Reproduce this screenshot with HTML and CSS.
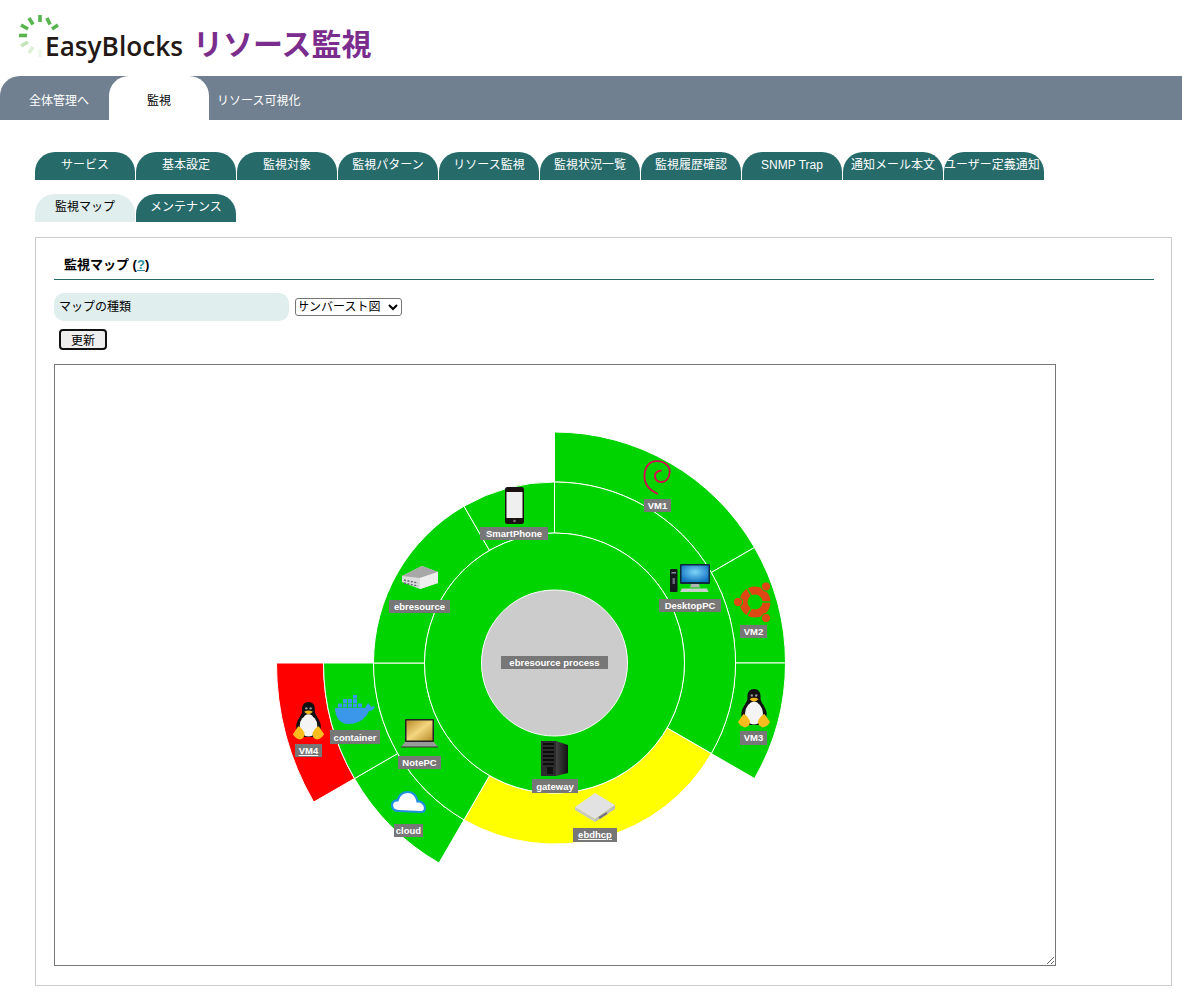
FILE: index.html
```html
<!DOCTYPE html>
<html lang="ja">
<head>
<meta charset="utf-8">
<title>リソース監視</title>
<link rel="stylesheet" href="styles.css">
</head>
<body>
<header class="brand">
  <svg class="logo" width="172" height="76" viewBox="18 0 172 76">
    <g fill="none" stroke-width="3.6">
      <line x1="19" y1="35.5" x2="27" y2="35.5" stroke="#57b44f"/>
      <line x1="21" y1="25" x2="28" y2="29" stroke="#57b44f"/>
      <line x1="29" y1="18" x2="33" y2="24.5" stroke="#57b44f"/>
      <line x1="40" y1="15" x2="40" y2="22" stroke="#57b44f"/>
      <line x1="47" y1="18" x2="50" y2="24.5" stroke="#57b44f"/>
      <line x1="52" y1="29" x2="58" y2="25" stroke="#57b44f"/>
      <line x1="21" y1="46" x2="28" y2="42" stroke="#c5e3bb"/>
      <line x1="29" y1="53" x2="33" y2="47" stroke="#dff0d8"/>
      <line x1="40" y1="49" x2="40" y2="57" stroke="#eef6ea"/>
    </g>
    <text class="logo-word" x="45" y="56" textLength="138" lengthAdjust="spacingAndGlyphs">EasyBlocks</text>
  </svg>
  <h1 class="title">リソース監視</h1>
</header>

<nav class="topnav">
  <a class="topnav-item first">全体管理へ</a>
  <a class="topnav-item active">監視</a>
  <a class="topnav-item plain">リソース可視化</a>
</nav>

<main class="content">
  <ul class="tabs">
    <li class="tab">サービス</li>
    <li class="tab">基本設定</li>
    <li class="tab">監視対象</li>
    <li class="tab">監視パターン</li>
    <li class="tab">リソース監視</li>
    <li class="tab">監視状況一覧</li>
    <li class="tab">監視履歴確認</li>
    <li class="tab">SNMP Trap</li>
    <li class="tab">通知メール本文</li>
    <li class="tab clip">ユーザー定義通知</li>
  </ul>
  <ul class="tabs second">
    <li class="tab current">監視マップ</li>
    <li class="tab">メンテナンス</li>
  </ul>

  <section class="panel">
    <h2 class="panel-title">監視マップ (<a class="help">?</a>)</h2>
    <div class="field">
      <label class="field-label">マップの種類</label>
      <select class="field-select"><option>サンバースト図</option></select>
    </div>
    <button class="update" type="button">更新</button>

    <div class="map">
      <svg class="map-svg" width="1000" height="600" viewBox="55 365 1000 600">
        <defs>
          <symbol id="tux" viewBox="0 0 32 39">
            <path fill="#111" d="M16 0C11 0 9 4 9.500 9C9.800 13 5 17 3.500 23C2.500 29 6 34 10 36H22C26 34 29.500 29 28.500 23C27 17 22.200 13 22.500 9C23 4 21 0 16 0Z"/>
            <ellipse cx="16" cy="24.500" rx="9" ry="11" fill="#f4f4f4"/>
            <path fill="#f4f4f4" d="M12 14Q16 11 20 14L21 18H11Z"/>
            <circle cx="13.800" cy="6.500" r="1.200" fill="#999"/><circle cx="18.200" cy="6.500" r="1.200" fill="#999"/>
            <path fill="#f4b81c" d="M11.500 10Q16 7.500 20.500 10Q16 15 11.500 10Z"/>
            <path fill="#f7bd1e" d="M0 33L5.500 25Q9 26 12 32Q12.500 37 7 38.500Q2 37 0 33Z"/>
            <path fill="#f7bd1e" d="M32 33L26.500 25Q23 26 20 32Q19.500 37 25 38.500Q30 37 32 33Z"/>
          </symbol>
          <radialGradient id="screen" cx=".5" cy=".4" r=".65"><stop offset="0" stop-color="#7ed4f8"/><stop offset="1" stop-color="#0f6fc0"/></radialGradient>
          <linearGradient id="gold" x1="0" y1="0" x2="1" y2="1"><stop offset="0" stop-color="#b98a2c"/><stop offset=".5" stop-color="#f3d67e"/><stop offset="1" stop-color="#b98a2c"/></linearGradient>
          <linearGradient id="rack" x1="0" y1="0" x2="1" y2="0"><stop offset="0" stop-color="#444"/><stop offset="1" stop-color="#111"/></linearGradient>
        </defs>

        <g transform="translate(554.500 663)" stroke="#fff" stroke-width="1">
          <path class="red" d="M-200 115.500A231 231 0 0 1 -231 0H-278A278 278 0 0 0 -240.800 139Z"/>
          <path class="ok" d="M0 -181V-231A231 231 0 0 1 200 -115.500L156.800 -90.500A181 181 0 0 0 0 -181Z"/>
          <path class="ok" d="M156.800 -90.500L200 -115.500A231 231 0 0 1 231 0H181A181 181 0 0 0 156.800 -90.500Z"/>
          <path class="ok" d="M181 0H231A231 231 0 0 1 200 115.500L156.800 90.500A181 181 0 0 0 181 0Z"/>
          <path class="ok" d="M-90.500 156.800L-115.500 200A231 231 0 0 1 -200 115.500L-156.800 90.500A181 181 0 0 0 -90.500 156.800Z"/>
          <path class="ok" d="M-156.800 90.500L-200 115.500A231 231 0 0 1 -231 0H-181A181 181 0 0 0 -156.800 90.500Z"/>
          <path class="ok" d="M0 -130V-181A181 181 0 0 1 156.800 90.500L112.600 65A130 130 0 0 0 0 -130Z"/>
          <path class="warn" d="M112.600 65L156.800 90.500A181 181 0 0 1 -90.500 156.800L-65 112.600A130 130 0 0 0 112.600 65Z"/>
          <path class="ok" d="M-65 112.600L-90.500 156.800A181 181 0 0 1 -181 0H-130A130 130 0 0 0 -65 112.600Z"/>
          <path class="ok" d="M-130 0H-181A181 181 0 0 1 -90.500 -156.800L-65 -112.600A130 130 0 0 0 -130 0Z"/>
          <path class="ok" d="M-65 -112.600L-90.500 -156.800A181 181 0 0 1 0 -181V-130A130 130 0 0 0 -65 -112.600Z"/>
          <circle class="ok" r="130"/>
          <circle class="root" r="73"/>
        </g>

        <!-- SmartPhone -->
        <g transform="translate(505 487)">
          <rect width="19" height="37" rx="2.500" fill="#1a1210"/>
          <rect x="1.500" y="5" width="16" height="26" fill="#efefef"/>
          <circle cx="9.500" cy="34" r="1.300" fill="#777"/>
        </g>
        <!-- switch -->
        <g transform="translate(402 566)">
          <path d="M0 10L20 0L36 6V17L18 23L0 16Z" fill="#dcdcdc"/>
          <path d="M0 10L20 0L36 6L18 12Z" fill="#a8a8a8"/>
          <path d="M18 12L36 6V17L18 23Z" fill="#eee"/>
          <path d="M2 14L16 17M2 17L16 20" stroke="#667" stroke-width="1.500" stroke-dasharray="2 1.500"/>
        </g>
        <!-- debian -->
        <path transform="translate(643 460)" fill="none" stroke="#d70751" stroke-width="1.800" d="M15 34C6 30 1 24 1.500 15C2 6 7 1 14 1.200C22 1.500 27 6 26.700 12C26.500 18 23 22 19 22C14 22.500 12 19 12 16C12 13 14 11 18.500 10.500"/>
        <!-- desktop -->
        <g transform="translate(670 563)">
          <rect x="0" y="6" width="7.500" height="23" rx="1" fill="#15181c"/>
          <rect x="1.500" y="9" width="4.500" height="1.500" fill="#889"/>
          <rect x="2.500" y="15" width="2.500" height="6" fill="#667"/>
          <rect x="10" y="1" width="30" height="20" rx="1" fill="#10283f"/>
          <rect x="11.500" y="2.500" width="27" height="16.500" fill="url(#screen)"/>
          <path d="M21 21H29L30 24.500H20Z" fill="#aeb4b4"/>
          <path d="M12 25.500H37L38.500 29H10Z" fill="#c9cfcf"/>
        </g>
        <!-- ubuntu -->
        <g transform="translate(755 602)">
          <circle r="11.500" fill="none" stroke="#dd4814" stroke-width="8"/>
          <path d="M6 0H18M-3 5.200L-9 15.600M-3 -5.200L-9 -15.600" stroke="#00d400" stroke-width="1.500"/>
          <circle cx="11" cy="-15.500" r="4.600" fill="#dd4814" stroke="#00d400" stroke-width="1"/>
          <circle cx="-17" cy="0" r="4.600" fill="#dd4814" stroke="#00d400" stroke-width="1"/>
          <circle cx="11" cy="16" r="4.600" fill="#dd4814" stroke="#00d400" stroke-width="1"/>
        </g>
        <use href="#tux" x="738" y="689" width="32" height="39"/>
        <use href="#tux" x="292" y="702" width="33" height="38"/>
        <!-- docker -->
        <g transform="translate(335 695)" fill="#3a97ea">
          <path d="M0 13H30C31 11 32 10 33 8C35 10 36 11 36 12C38 11 39 11 40 12C38 15 36 16 34 16C31 23 24 29 13 29C5 29 0 22 0 13Z"/>
          <rect x="3" y="8.500" width="4" height="4"/><rect x="8" y="8.500" width="4" height="4"/><rect x="13" y="8.500" width="4" height="4"/><rect x="18" y="8.500" width="4" height="4"/><rect x="23" y="8.500" width="4" height="4"/>
          <rect x="8" y="4" width="4" height="4"/><rect x="13" y="4" width="4" height="4"/><rect x="18" y="4" width="4" height="4"/>
          <rect x="18" y="0" width="4" height="3.500"/>
        </g>
        <!-- notebook -->
        <g transform="translate(401 719)">
          <rect x="4" y="0" width="29" height="23" rx="1" fill="#222"/>
          <rect x="5.500" y="1.500" width="26" height="20" fill="url(#gold)"/>
          <path d="M4 23H33L37 28H0Z" fill="#9a9a9a"/>
          <path d="M0 28H37" stroke="#333" stroke-width="1"/>
        </g>
        <!-- cloud -->
        <path transform="translate(391 791)" fill="#fff" stroke="#1e8fe0" stroke-width="2.200" d="M8 20C3 20 1 17 1 14C1 11 4 9 6.500 9.500C8 4 12 1 17 1C22 1 26 5 26.500 10.500C30 10 34 13 34 17C34 20 32 21 30 21Z"/>
        <!-- server -->
        <g transform="translate(541 740)">
          <path d="M15 1L27 5V33L15 36Z" fill="url(#rack)"/>
          <rect x="0" y="1" width="15" height="35" fill="#2c2c2c"/>
          <path d="M2 4H13M2 8H13M2 12H13M2 16H13M2 20H13M2 24H13" stroke="#0c0c0c" stroke-width="2"/>
          <rect x="6" y="27" width="6" height="7" fill="#111"/>
        </g>
        <!-- router -->
        <g transform="translate(575 793)">
          <path d="M0 14L20 0L40 12L20 26Z" fill="#e2e2e2"/>
          <path d="M0 14V17L20 29V26Z" fill="#c8c8c8"/>
          <path d="M20 26V29L40 16V12Z" fill="#bcbcbc"/>
          <path d="M24 25L32 20" stroke="#778" stroke-width="2.500"/>
        </g>

        <g class="labels">
          <rect x="501" y="656" width="107" height="13"/><text x="554.500" y="666">ebresource process</text>
          <rect x="644" y="499" width="27" height="13"/><text x="657.500" y="509">VM1</text>
          <rect x="659" y="599" width="62" height="13"/><text x="690" y="609">DesktopPC</text>
          <rect x="740" y="625" width="27" height="13"/><text x="753.500" y="635">VM2</text>
          <rect x="740" y="731" width="27" height="14"/><text x="753.500" y="741">VM3</text>
          <rect x="532" y="779" width="46" height="14"/><text x="555" y="790">gateway</text>
          <rect x="573" y="828" width="44" height="14"/><text class="link" x="595" y="838">ebdhcp</text>
          <rect x="480" y="527" width="68" height="13"/><text x="514" y="537">SmartPhone</text>
          <rect x="389" y="600" width="61" height="13"/><text x="419.500" y="610">ebresource</text>
          <rect x="330" y="730" width="50" height="14"/><text x="355" y="741">container</text>
          <rect x="398" y="756" width="43" height="13"/><text x="419.500" y="766">NotePC</text>
          <rect x="295" y="744" width="27" height="13"/><text class="link" x="308.500" y="754">VM4</text>
          <rect x="394" y="824" width="29" height="13"/><text x="408.500" y="834">cloud</text>
        </g>
      </svg>
    </div>
  </section>
</main>
</body>
</html>
```

FILE: styles.css
```css
* { box-sizing: border-box; }

body {
  margin: 0;
  background: #fff;
  color: #000;
  font-family: "Liberation Sans", "Noto Sans CJK JP", sans-serif;
  font-size: 12px;
}

.brand {
  display: flex;
  height: 76px;
  padding-left: 18px;
  align-items: flex-start;
}

.logo { display: block; flex: none; }

.logo-word {
  font-family: "Open Sans", sans-serif;
  font-size: 27px;
  font-weight: 600;
  fill: #231815;
}

.title {
  margin: 23px 0 0 3px;
  color: #7b2d8e;
  font-size: 30px;
  font-weight: 700;
  line-height: 44px;
}

.topnav {
  display: flex;
  height: 44px;
  background: #708090;
  border-top-left-radius: 20px;
}

.topnav-item {
  display: block;
  color: #fff;
  line-height: 50px;
  white-space: nowrap;
}

.first { width: 109px; padding-left: 29px; }

.active {
  width: 100px;
  background: #fff;
  color: #000;
  text-align: center;
  border-radius: 20px 20px 0 0;
}

.plain { padding-left: 8px; }

.content { padding: 32px 10px 8px 35px; }

.tabs {
  display: flex;
  gap: 1px;
  margin: 0;
  padding: 0;
  list-style: none;
}

.second { margin-top: 14px; }

.tab {
  flex: none;
  width: 100px;
  height: 28px;
  background: #266a6a;
  color: #fff;
  line-height: 27px;
  text-align: center;
  white-space: nowrap;
  border-radius: 20px 20px 0 0;
  overflow: hidden;
}

.clip { text-align: left; }

.current {
  background: #e0eeed;
  color: #000;
}

.panel {
  margin-top: 15px;
  height: 749px;
  padding: 0 17px 0 18px;
  border: 1px solid #ccc;
}

.panel-title {
  margin: 0;
  height: 42px;
  padding: 17px 0 0 10px;
  font-size: 13px;
  font-weight: 700;
  line-height: 20px;
  border-bottom: 1px solid #266a6a;
}

.help {
  color: #2a8a9a;
  text-decoration: underline;
}

.field {
  display: flex;
  align-items: center;
  margin-top: 13px;
}

.field-label {
  width: 235px;
  height: 28px;
  padding-left: 5px;
  background: #e0eeed;
  line-height: 28px;
  border-radius: 10px;
}

.field-select {
  width: 107px;
  height: 18px;
  margin-left: 6px;
  padding: 0;
  background: #fff;
  color: #000;
  font: 12px "Liberation Sans", "Noto Sans CJK JP", sans-serif;
  text-indent: -3px;
  border: 1px solid #767676;
  border-radius: 3px;
}

.update {
  display: block;
  width: 48px;
  height: 21px;
  margin: 8px 0 0 5px;
  padding: 0 0 2px;
  background: #efefef;
  color: #000;
  font: 12px "Liberation Sans", "Noto Sans CJK JP", sans-serif;
  border: 2px solid #111;
  border-radius: 4px;
}

.map {
  width: 1002px;
  height: 602px;
  margin-top: 14px;
  border: 1px solid #777;
  overflow: hidden;
  resize: both;
}

.map-svg { display: block; }

.ok { fill: #00d400; }
.warn { fill: #ffff00; }
.red { fill: #ff0000; }
.root { fill: #ccc; }

.labels rect { fill: #777; }

.labels text {
  fill: #fff;
  font-family: "Liberation Sans", Arial, sans-serif;
  font-size: 9.5px;
  font-weight: 700;
  text-anchor: middle;
}

.labels .link { text-decoration: underline; }
```
